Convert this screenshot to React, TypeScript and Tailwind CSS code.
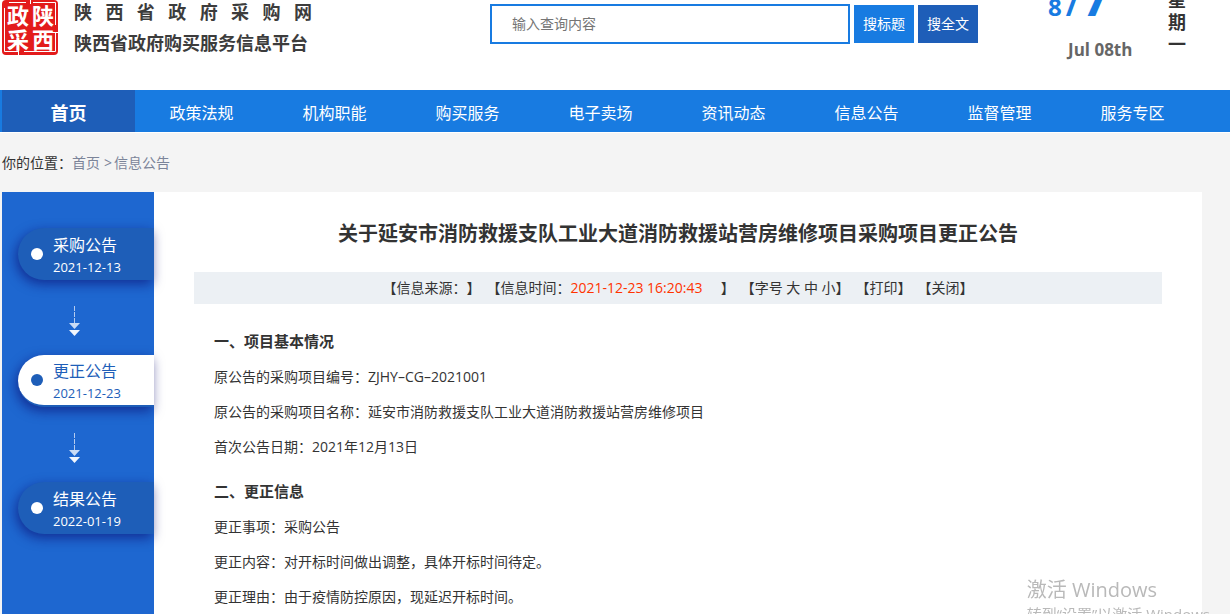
import clsx from "clsx";

const navItems = [
  "首页",
  "政策法规",
  "机构职能",
  "购买服务",
  "电子卖场",
  "资讯动态",
  "信息公告",
  "监督管理",
  "服务专区",
];

const steps = [
  { title: "采购公告", date: "2021-12-13" },
  { title: "更正公告", date: "2021-12-23", active: true },
  { title: "结果公告", date: "2022-01-19" },
];

const sections = [
  {
    heading: "一、项目基本情况",
    lines: [
      "原公告的采购项目编号：ZJHY–CG–2021001",
      "原公告的采购项目名称：延安市消防救援支队工业大道消防救援站营房维修项目",
      "首次公告日期：2021年12月13日",
    ],
  },
  {
    heading: "二、更正信息",
    lines: [
      "更正事项：采购公告",
      "更正内容：对开标时间做出调整，具体开标时间待定。",
      "更正理由：由于疫情防控原因，现延迟开标时间。",
    ],
  },
];

const Seal = () => (
  <svg width="56" height="55" viewBox="0 0 56 55" className="shrink-0">
    <rect width="56" height="55" rx="4" fill="#e31b1b" />
    <path
      d="M2.5 8V51.5H17M22 51.5H53.5V33M53.5 25V2.5H31M24 2.5H7M28.5 0V4M16.5 50V55M49 32.5H56"
      fill="none"
      stroke="#fff"
    />
    <g
      fill="#fff"
      fontSize="22"
      fontWeight="700"
      textAnchor="middle"
      fontFamily="'Noto Sans CJK SC', sans-serif"
    >
      <text x="16" y="24">政</text>
      <text x="41" y="24">陕</text>
      <text x="16" y="48">采</text>
      <text x="41" y="48">西</text>
    </g>
  </svg>
);

const StepArrow = () => (
  <svg width="11" height="30" viewBox="0 0 11 30">
    <path d="M5.5 0V17" stroke="#b4cbef" strokeDasharray="5 1" />
    <path d="M0 17H11L5.5 23Z" fill="#c9dbf5" />
    <path d="M0 24H11L5.5 30Z" fill="#f1f6fd" />
  </svg>
);

const Header = () => (
  <header className="h-[90px] overflow-hidden bg-white">
    <div className="ml-0.5 flex max-w-[1200px] items-start">
      <a href="#" className="flex w-[310px] gap-4">
        <Seal />
        <div className="flex flex-1 flex-col gap-1 font-bold text-[#3c3c3c]">
          <span className="flex justify-between text-lg leading-6">
            {[..."陕西省政府采购网"].map((char) => (
              <span key={char}>{char}</span>
            ))}
          </span>
          <span className="text-lg leading-[30px] whitespace-nowrap">
            陕西省政府购买服务信息平台
          </span>
        </div>
      </a>
      <form className="mt-1 ml-[178px] flex items-center gap-1">
        <input
          type="text"
          aria-label="输入查询内容"
          placeholder="输入查询内容"
          className="h-10 w-[360px] border-2 border-[#187be1] px-5 pb-0.5 text-sm placeholder:text-[#757575]"
        />
        <button type="button" className="h-[38px] w-[60px] bg-[#187be1] text-sm text-white">
          搜标题
        </button>
        <button type="button" className="h-[38px] w-[60px] bg-[#1e5eb8] text-sm text-white">
          搜全文
        </button>
      </form>
      <div className="-mt-10 ml-[70px] w-[84px] font-bold">
        <p className="flex h-20 items-baseline gap-1 text-[#187be1]">
          <span className="text-2xl leading-[76px]">8</span>
          <span className="text-3xl leading-[76px]">/</span>
          <span className="text-5xl leading-[76px]">7</span>
        </p>
        <p className="ml-5 text-[17px] leading-5 whitespace-nowrap text-[#666]">Jul 08th</p>
      </div>
      <p className="-mt-[11px] ml-9 w-[18px] text-lg leading-[22px] font-bold">星期一</p>
    </div>
  </header>
);

const Nav = () => (
  <nav className="border-b border-white bg-[#187be1]">
    <ul className="ml-0.5 flex max-w-[1197px]">
      {navItems.map((item, i) => (
        <li key={item} className="flex-1">
          <a
            href="#"
            className={clsx(
              "block pt-2.5 pb-1.5 text-center text-white",
              i === 0 ? "bg-[#1e5eb8] text-lg leading-[26px] font-bold" : "text-base leading-[26px]"
            )}
          >
            {item}
          </a>
        </li>
      ))}
    </ul>
  </nav>
);

const Sidebar = () => (
  <aside className="relative z-10 w-[152px] shrink-0 bg-[#1e67d0] pt-9 pl-4">
    {steps.map((step, i) => (
      <div key={step.title}>
        <a
          href="#"
          className={clsx(
            "flex h-[52px] items-center gap-2.5 rounded-l-full pl-[13px] shadow-[-2px_4px_12px_rgba(10,10,110,0.6)]",
            step.active
              ? "border-b-2 border-[#1e5eb8] bg-white text-[#1e5eb8]"
              : "bg-[#1e5eb8] text-white"
          )}
        >
          <span
            className={clsx("size-3 rounded-full", step.active ? "bg-[#1e5eb8]" : "bg-white")}
          />
          <span className="pt-0.5">
            <span className="block text-base leading-6">{step.title}</span>
            <span className="block text-[13px] leading-5">{step.date}</span>
          </span>
        </a>
        {i < steps.length - 1 && (
          <div className="flex h-[75px] items-center pt-1.5 pl-[51px]">
            <StepArrow />
          </div>
        )}
      </div>
    ))}
  </aside>
);

const InfoBar = () => (
  <div className="flex h-8 items-center justify-center gap-1.5 bg-[#ecf0f4] text-sm whitespace-pre [text-spacing-trim:space-all]">
    <span>【信息来源：】</span>
    <span>
      【信息时间：<span className="text-[#ff3300]">2021-12-23 16:20:43</span>
      {"     "}】
    </span>
    <span>
      【字号 <a href="#">大</a> <a href="#">中</a> <a href="#">小</a>】
    </span>
    <span>
      【<a href="#">打印</a>】
    </span>
    <span>
      【<a href="#">关闭</a>】
    </span>
  </div>
);

const Article = () => (
  <main className="min-w-0 flex-1 bg-white px-10 pt-6">
    <h1 className="text-center text-xl leading-9 font-bold">
      关于延安市消防救援支队工业大道消防救援站营房维修项目采购项目更正公告
    </h1>
    <div className="mt-5">
      <InfoBar />
    </div>
    <div className="px-5 pt-5">
      {sections.map((section) => (
        <section key={section.heading} className="mb-2.5">
          <h2 className="text-[15px] leading-[35px] font-bold">{section.heading}</h2>
          {section.lines.map((line) => (
            <p key={line} className="text-sm leading-[35px]">
              {line}
            </p>
          ))}
        </section>
      ))}
    </div>
  </main>
);

const App = () => {
  return (
    <div className="h-screen overflow-hidden bg-[#f4f4f4] font-['Open_Sans','Noto_Sans_CJK_SC',sans-serif] text-[#333]">
      <Header />
      <Nav />
      <div className="ml-0.5 max-w-[1200px]">
        <p className="py-5 text-sm leading-[19px]">
          你的位置：
          <a href="#" className="text-[#7b8499]">首页</a>
          <span className="mr-0.5 ml-1 text-[#7b8499]">&gt;</span>
          <a href="#" className="text-[#7b8499]">信息公告</a>
        </p>
        <div className="flex min-h-screen">
          <Sidebar />
          <Article />
        </div>
      </div>
      {/* System activation notice */}
      <div className="pointer-events-none fixed right-5 -bottom-3 whitespace-nowrap text-[#b9b9b9]">
        <p className="text-xl leading-6">激活 Windows</p>
        <p className="text-[15px] leading-6">转到“设置”以激活 Windows</p>
      </div>
    </div>
  );
};

export default App;
